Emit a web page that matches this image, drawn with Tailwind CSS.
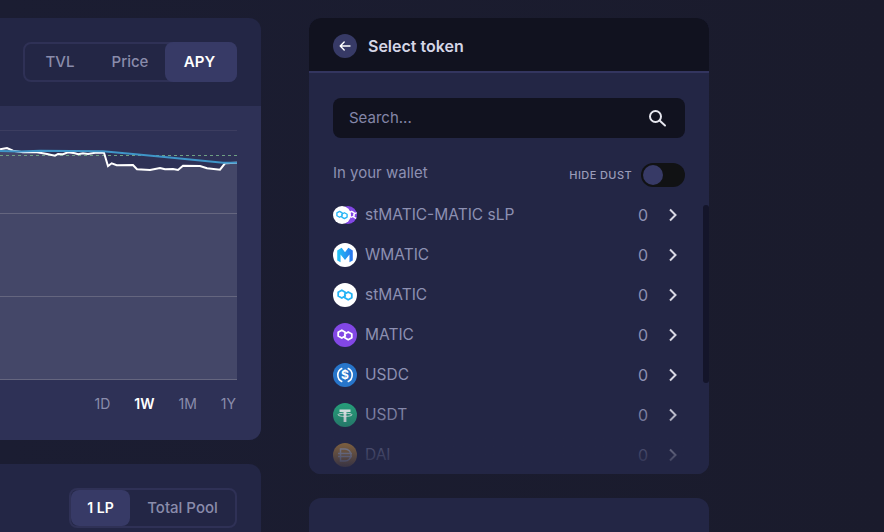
<!DOCTYPE html>
<html>
<head>
<meta charset="utf-8">
<script src="https://cdn.jsdelivr.net/npm/@tailwindcss/browser@4"></script>
</head>
<body class="bg-[#1a1c2f]">
<svg width="0" height="0" class="absolute">
  <defs>
    <symbol id="poly" viewBox="0 0 24 24">
      <path d="M8.8 7.2 12.2 9.2 V13 L8.8 15 5.2 13 V9.2 Z M15.2 9 18.8 11 V14.8 L15.2 16.8 11.8 14.8 V11 Z" fill="none" stroke="currentColor" stroke-width="1.8" stroke-linejoin="round"/>
    </symbol>
    <linearGradient id="mg" x1="0" x2="1" y1="0" y2="0">
      <stop offset="0" stop-color="#22c4f5"/><stop offset="1" stop-color="#2a74ee"/>
    </linearGradient>
  </defs>
</svg>
<div class="w-[884px] h-[532px] overflow-hidden flex font-['Inter','Liberation_Sans',sans-serif] bg-gradient-to-r from-[#1b1d32] to-[#1a1b2c]">
  <!-- left column -->
  <div class="w-[261px] shrink-0 pt-[18px] flex flex-col gap-6">
    <div class="h-[422px] shrink-0 rounded-r-xl overflow-hidden bg-[#232645] flex flex-col">
      <div class="h-[88px] shrink-0 flex items-center justify-end pr-6">
        <div class="flex w-[214px] h-10 rounded-lg border-2 border-[#2f3156] text-[15px] font-medium text-[#8a8cab]">
          <div class="w-[70px] flex items-center justify-center">TVL</div>
          <div class="w-[70px] flex items-center justify-center">Price</div>
          <div class="flex-1 -m-[2px] ml-0 pr-[3px] bg-[#373a66] rounded-lg flex items-center justify-center text-white font-semibold">APY</div>
        </div>
      </div>
      <div class="flex-1 bg-[#2e3156] flex flex-col">
        <svg class="block mt-[22px] shrink-0" width="237" height="253" viewBox="0 128 237 253">
          <line x1="0" x2="237" y1="130.5" y2="130.5" stroke="#3c3d60"/>
          <path d="M0 149.3 L7 148 L13 150.7 L23 152.3 L37 152.3 L47 154 L55 155.7 L58 154 L63 154.3 L68 152.3 L75 153.3 L78 154.3 L83 153.3 L88 154 L95 152.7 L104 152.7 L108 166 L111.7 163.3 L116.7 165.3 L133 165 L137 169.3 L150 170 L160 168 L165 169.3 L173 169 L178 170 L183 165.7 L200 166 L207 168.3 L220 169.7 L225 163.3 L237 162.7 V380 H0 Z" fill="#444768"/>
          <line x1="0" x2="237" y1="213.5" y2="213.5" stroke="#65667f"/>
          <line x1="0" x2="237" y1="296.5" y2="296.5" stroke="#65667f"/>
          <line x1="0" x2="237" y1="379.5" y2="379.5" stroke="#65667f"/>
          <line x1="0" x2="237" y1="155.5" y2="155.5" stroke="#6f9f83" stroke-dasharray="3 3"/>
          <path d="M0 149.3 L7 148 L13 150.7 L23 152.3 L37 152.3 L47 154 L55 155.7 L58 154 L63 154.3 L68 152.3 L75 153.3 L78 154.3 L83 153.3 L88 154 L95 152.7 L104 152.7 L108 166 L111.7 163.3 L116.7 165.3 L133 165 L137 169.3 L150 170 L160 168 L165 169.3 L173 169 L178 170 L183 165.7 L200 166 L207 168.3 L220 169.7 L225 163.3 L237 162.7" fill="none" stroke="#ffffff" stroke-width="2"/>
          <path d="M0 151 L20 151.6 L40 150.7 L103 151.3 L133 154 L167 157.3 L223 162.7 L237 162.7" fill="none" stroke="#3f95c8" stroke-width="2"/>
        </svg>
        <div class="flex justify-end pr-[25px] mt-[13px] gap-[24px] text-sm text-[#8a8cab] leading-[20px]">
          <span>1D</span><span class="text-white font-semibold">1W</span><span>1M</span><span>1Y</span>
        </div>
      </div>
    </div>
    <div class="flex-1 rounded-tr-xl bg-[#232645] pt-6 pr-6 flex justify-end items-start">
      <div class="flex w-[168px] h-10 rounded-lg border-2 border-[#2f3156] text-[15px] font-medium text-[#8a8cab]">
        <div class="w-[59px] bg-[#373a66] rounded-lg flex items-center justify-center text-white font-semibold text-sm">1 LP</div>
        <div class="flex-1 flex items-center justify-center">Total Pool</div>
      </div>
    </div>
  </div>

  <!-- right column -->
  <div class="w-[400px] shrink-0 ml-12 pt-[18px] flex flex-col gap-6">
    <div class="relative h-[456px] shrink-0 rounded-xl overflow-hidden bg-[#232645]">
      <div class="h-[55px] bg-[#11121f] shadow-[inset_0_-2px_0_#33355f] flex items-center gap-[11px] pl-6">
        <div class="w-6 h-6 rounded-full bg-[#373a66] flex items-center justify-center">
          <svg width="14" height="14" viewBox="0 0 14 14" fill="none" stroke="#fff" stroke-width="1.4" stroke-linecap="round" stroke-linejoin="round"><path d="M12 7H2.2M6.2 3 2.2 7l4 4"/></svg>
        </div>
        <span class="text-base font-semibold text-[#d5d6e6]">Select token</span>
      </div>
      <div class="px-6 pt-[25px]">
        <div class="h-10 bg-[#11121f] rounded-lg flex items-center justify-between pl-4 pr-[18px]">
          <span class="text-[15px] text-[#8486a8]">Search...</span>
          <svg width="20" height="20" viewBox="0 0 20 20" fill="none" stroke="#e6e6ee" stroke-width="2" stroke-linecap="round"><circle cx="8.5" cy="8.5" r="5.5"/><path d="M12.6 12.6 18 17.5"/></svg>
        </div>
        <div class="h-6 mt-[25px] flex items-center justify-between">
          <span class="text-[15px] text-[#8d90b2] pb-[3px]">In your wallet</span>
          <div class="flex items-center gap-[9px]">
            <span class="text-[11px] font-medium tracking-[0.4px] text-[#9a9cb8]">HIDE DUST</span>
            <div class="w-11 h-6 rounded-full bg-[#111214] flex items-center pl-[2px]">
              <div class="w-5 h-5 rounded-full bg-[#373a66]"></div>
            </div>
          </div>
        </div>
        <div class="mt-2 flex flex-col text-[15.5px] text-[#8d90b2]">
          <div class="h-10 flex items-center">
            <div class="relative w-6 h-6 mr-2 shrink-0">
              <div class="absolute right-0 top-[3px] w-[18px] h-[18px] rounded-full bg-[#8247e5] text-white overflow-hidden"><svg width="18" height="18" class="ml-[6px]"><use href="#poly"/></svg></div>
              <div class="absolute left-0 top-[3px] w-[18px] h-[18px] rounded-full bg-white text-[#25b4f5]"><svg width="18" height="18"><use href="#poly"/></svg></div>
            </div>
            <span>stMATIC-MATIC sLP</span>
            <span class="ml-auto mr-[18px] text-base">0</span>
            <svg width="14" height="14" viewBox="0 0 14 14" fill="none" stroke="#d8d8e4" stroke-width="2" class="mr-[5px]"><path d="M4 1.5 9.5 7 4 12.5"/></svg>
          </div>
          <div class="h-10 flex items-center">
            <div class="w-6 h-6 mr-2 shrink-0 rounded-full bg-white flex items-center justify-center">
              <svg width="20" height="20" viewBox="0 0 18 18"><path d="M2 5 6 2.5 9 6.5 12 2.5 16 5V14L13 15.5V8.5L9 13.5 5 8.5V15.5L2 14Z" fill="url(#mg)"/></svg>
            </div>
            <span>WMATIC</span>
            <span class="ml-auto mr-[18px] text-base">0</span>
            <svg width="14" height="14" viewBox="0 0 14 14" fill="none" stroke="#d8d8e4" stroke-width="2" class="mr-[5px]"><path d="M4 1.5 9.5 7 4 12.5"/></svg>
          </div>
          <div class="h-10 flex items-center">
            <div class="w-6 h-6 mr-2 shrink-0 rounded-full bg-white text-[#25b4f5]"><svg width="24" height="24"><use href="#poly"/></svg></div>
            <span>stMATIC</span>
            <span class="ml-auto mr-[18px] text-base">0</span>
            <svg width="14" height="14" viewBox="0 0 14 14" fill="none" stroke="#d8d8e4" stroke-width="2" class="mr-[5px]"><path d="M4 1.5 9.5 7 4 12.5"/></svg>
          </div>
          <div class="h-10 flex items-center">
            <div class="w-6 h-6 mr-2 shrink-0 rounded-full bg-[#8247e5] text-white"><svg width="24" height="24"><use href="#poly"/></svg></div>
            <span>MATIC</span>
            <span class="ml-auto mr-[18px] text-base">0</span>
            <svg width="14" height="14" viewBox="0 0 14 14" fill="none" stroke="#d8d8e4" stroke-width="2" class="mr-[5px]"><path d="M4 1.5 9.5 7 4 12.5"/></svg>
          </div>
          <div class="h-10 flex items-center">
            <svg width="24" height="24" viewBox="0 0 24 24" class="mr-2 shrink-0">
              <circle cx="12" cy="12" r="12" fill="#2775ca"/>
              <path d="M9.3 5.2a7.4 7.4 0 0 0 0 13.6M14.7 5.2a7.4 7.4 0 0 1 0 13.6" fill="none" stroke="#fff" stroke-width="1.6"/>
              <text x="12" y="16.2" text-anchor="middle" font-size="12" font-weight="700" fill="#fff" font-family="Inter, sans-serif">$</text>
            </svg>
            <span>USDC</span>
            <span class="ml-auto mr-[18px] text-base">0</span>
            <svg width="14" height="14" viewBox="0 0 14 14" fill="none" stroke="#d8d8e4" stroke-width="2" class="mr-[5px]"><path d="M4 1.5 9.5 7 4 12.5"/></svg>
          </div>
          <div class="h-10 flex items-center">
            <svg width="24" height="24" viewBox="0 0 24 24" class="mr-2 shrink-0">
              <circle cx="12" cy="12" r="12" fill="#26a17b"/>
              <path d="M6.5 6.5H17.5V9H13.4V19H10.6V9H6.5Z" fill="#fff" fill-opacity=".9"/>
              <ellipse cx="12" cy="11.8" rx="7" ry="1.6" fill="none" stroke="#fff" stroke-opacity=".85" stroke-width="1"/>
            </svg>
            <span>USDT</span>
            <span class="ml-auto mr-[18px] text-base">0</span>
            <svg width="14" height="14" viewBox="0 0 14 14" fill="none" stroke="#d8d8e4" stroke-width="2" class="mr-[5px]"><path d="M4 1.5 9.5 7 4 12.5"/></svg>
          </div>
          <div class="h-10 flex items-center">
            <svg width="24" height="24" viewBox="0 0 24 24" class="mr-2 shrink-0">
              <circle cx="12" cy="12" r="12" fill="#f5ac37"/>
              <path d="M7.5 6H12a6 6 0 0 1 0 12H7.5ZM5 10.5H19M5 13.5H19" fill="none" stroke="#fff" stroke-width="1.5"/>
            </svg>
            <span>DAI</span>
            <span class="ml-auto mr-[18px] text-base">0</span>
            <svg width="14" height="14" viewBox="0 0 14 14" fill="none" stroke="#d8d8e4" stroke-width="2" class="mr-[5px]"><path d="M4 1.5 9.5 7 4 12.5"/></svg>
          </div>
        </div>
      </div>
      <div class="absolute left-0 right-0 bottom-0 h-[72px] bg-gradient-to-b from-[#232645]/0 to-[#232645]"></div>
      <div class="absolute right-0 top-[187px] w-[6px] h-[178px] rounded-full bg-[#14152a]"></div>
    </div>
    <div class="flex-1 rounded-t-xl bg-[#232645] pl-6 pt-[30px]">
      <div class="text-lg font-semibold text-white leading-6">About</div>
    </div>
  </div>
</div>
</body>
</html>
